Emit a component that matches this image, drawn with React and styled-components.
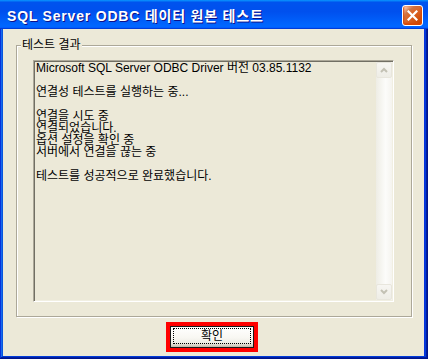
import React from 'react';
import styled, { createGlobalStyle } from 'styled-components';

const GlobalStyle = createGlobalStyle`
  html, body {
    margin: 0;
    padding: 0;
    background: #0831d9;
  }
  * {
    box-sizing: border-box;
  }
`;

const UI_FONT = `"Liberation Sans", Arial, "Noto Sans CJK KR", sans-serif`;

// ---------------------------------------------

const Window = styled.div`
  width: 428px;
  height: 359px;
  display: flex;
  flex-direction: column;
  font-family: ${UI_FONT};
  font-size: 12px;
  color: #000;
`;

const TitleBar = styled.div`
  height: 29px;
  flex: none;
  display: flex;
  align-items: center;
  justify-content: space-between;
  padding: 1px 5px 0 7px;
  background: linear-gradient(180deg, #0997ff, #0053ee 8%, #0050ee 40%, #06f 88%, #06f 93%, #005bff 95%, #003dd7 96%, #003dd7);
`;

const TitleText = styled.span`
  color: #fff;
  font-weight: bold;
  font-size: 14px;
  letter-spacing: 0.8px;
  text-shadow: 1px 1px #0f1089;
  white-space: nowrap;
`;

const CloseButton = styled.button`
  width: 21px;
  height: 21px;
  padding: 0;
  display: flex;
  align-items: center;
  justify-content: center;
  border: 1px solid #fff;
  border-radius: 3px;
  background: radial-gradient(circle at 90% 90%, #cc4600 0%, #dc6527 55%, #cd7546 70%, #ffccb2 90%, #fff 100%);
  box-shadow: inset 0 -1px 2px 1px #da4600;
`;

// ---------------------------------------------

const Frame = styled.div`
  flex: 1;
  display: flex;
  padding: 0 4px 3px 3px;
  background: #0831d9;
  box-shadow: inset -1px -1px #00138c, inset 1px 0 #0831d9, inset -2px -2px #001ea0, inset 2px 0 #166aee, inset -3px -3px #003bda, inset 3px 0 #0855dd;
`;

const Body = styled.div`
  flex: 1;
  display: flex;
  flex-direction: column;
  background: #ece9d8;
  padding: 16px 12px 4px 13px;
`;

// ---------------------------------------------

const GroupBox = styled.div`
  position: relative;
  height: 272px;
  display: flex;
  padding: 14px 17px 14px 16px;
  border: 1px solid #aca899;
  box-shadow: inset 1px 1px 0 #fff, 1px 1px 0 #fff;
`;

const Legend = styled.span`
  position: absolute;
  top: -7px;
  left: 4px;
  padding: 0 1px;
  line-height: 12px;
  background: #ece9d8;
`;

const TextBox = styled.div`
  flex: 1;
  display: flex;
  padding: 1px;
  border: 1px solid;
  border-color: #aca899 #fff #fff #aca899;
  box-shadow: inset 1px 1px #716f64, inset -1px -1px #f1efe2;
  background: #ece9d8;
`;

const TextContent = styled.div`
  flex: 1;
  padding: 0 1px;
  line-height: 12px;
  white-space: pre;
`;

const TextLine = styled.div`
  height: 12px;
`;

// ---------------------------------------------

const ScrollBar = styled.div`
  width: 16px;
  display: flex;
  flex-direction: column;
  background: linear-gradient(90deg, #eeede5, #fcfcfa 60%, #f5f4ef);
`;

const ScrollButton = styled.div`
  width: 16px;
  height: 16px;
  display: flex;
  align-items: center;
  justify-content: center;
  border: 1px solid #e8e6dd;
  border-radius: 2px;
  background: linear-gradient(180deg, #f7f6f2, #eeede6);
`;

const ScrollTrack = styled.div`
  flex: 1;
`;

// ---------------------------------------------

const ButtonRow = styled.div`
  display: flex;
  justify-content: center;
  margin-top: 5px;
  padding-right: 4px;
`;

const Highlight = styled.div`
  width: 92px;
  height: 30px;
  border: 4px solid #ff0000;
  display: flex;
`;

const OkButton = styled.button`
  flex: 1;
  display: flex;
  padding: 1px 2px 3px 2px;
  border: 1px solid #1a1a1a;
  border-radius: 0;
  background: linear-gradient(180deg, #ffffff, #f8f7f2 55%, #ecebe4 80%, #d6d0c5 92%, #bdb6a8);
  font-family: ${UI_FONT};
  font-size: 12px;
  color: #000;
`;

const FocusRing = styled.span`
  flex: 1;
  display: flex;
  align-items: center;
  justify-content: center;
  border: 1px dotted #000;
  line-height: 12px;
`;

// ---------------------------------------------

const lines = [
  'Microsoft SQL Server ODBC Driver 버전 03.85.1132',
  '',
  '연결성 테스트를 실행하는 중...',
  '',
  '연결을 시도 중',
  '연결되었습니다.',
  '옵션 설정을 확인 중',
  '서버에서 연결을 끊는 중',
  '',
  '테스트를 성공적으로 완료했습니다.',
];

const Chevron = ({ up }) => (
  <svg width="8" height="6" viewBox="0 0 8 6">
    <path
      d={up ? 'M1 5 L4 2 L7 5' : 'M1 1 L4 4 L7 1'}
      fill="none"
      stroke="#c3c1b4"
      strokeWidth="2"
    />
  </svg>
);

const App = () => {
  return (
    <>
      <GlobalStyle />
      <Window>
        <TitleBar>
          <TitleText>SQL Server ODBC 데이터 원본 테스트</TitleText>
          <CloseButton aria-label="닫기">
            <svg width="11" height="11" viewBox="0 0 11 11">
              <path d="M1.5 1.5 L9.5 9.5 M9.5 1.5 L1.5 9.5" stroke="#fff" strokeWidth="2.2" strokeLinecap="square" />
            </svg>
          </CloseButton>
        </TitleBar>

        <Frame>
          <Body>
            <GroupBox>
              <Legend>테스트 결과</Legend>
              <TextBox>
                <TextContent>
                  {lines.map((line, i) => (
                    <TextLine key={i}>{line}</TextLine>
                  ))}
                </TextContent>
                <ScrollBar>
                  <ScrollButton><Chevron up /></ScrollButton>
                  <ScrollTrack />
                  <ScrollButton><Chevron /></ScrollButton>
                </ScrollBar>
              </TextBox>
            </GroupBox>

            <ButtonRow>
              <Highlight>
                <OkButton>
                  <FocusRing>확인</FocusRing>
                </OkButton>
              </Highlight>
            </ButtonRow>
          </Body>
        </Frame>
      </Window>
    </>
  );
};

export default App;
